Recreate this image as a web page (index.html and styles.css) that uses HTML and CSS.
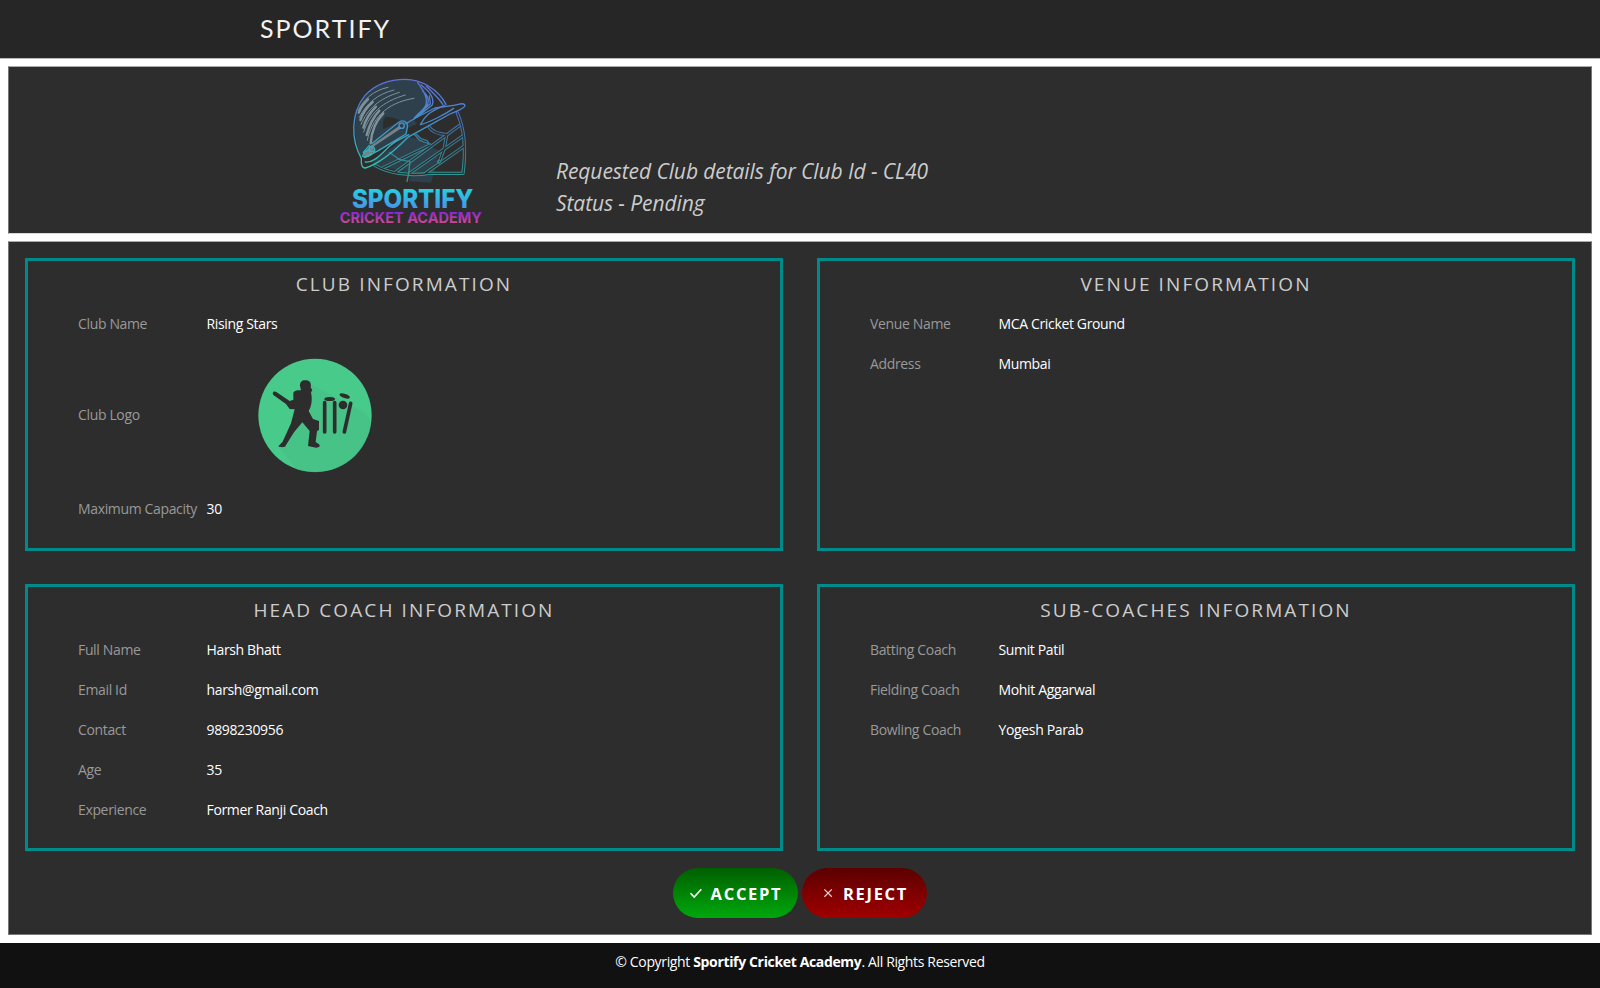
FILE: index.html
```html
<!DOCTYPE html>
<html lang="en">
<head>
<meta charset="utf-8">
<title>Sportify</title>
<link rel="stylesheet" href="styles.css">
</head>
<body>
<header class="topbar"><a class="brand">SPORTIFY</a></header>
<main>
  <section class="panel intro">
    <svg class="logo" viewBox="0 6 510 498">
      <defs>
        <linearGradient id="shell" gradientUnits="userSpaceOnUse" x1="0" y1="42" x2="0" y2="310"><stop offset="0" stop-color="#5f6fdb"/><stop offset=".5" stop-color="#438fc8"/><stop offset="1" stop-color="#2fc6ae"/></linearGradient>
        <linearGradient id="grill" gradientUnits="userSpaceOnUse" x1="0" y1="120" x2="0" y2="350"><stop offset="0" stop-color="#5367c8"/><stop offset=".55" stop-color="#367f93"/><stop offset="1" stop-color="#319b91"/></linearGradient>
        <linearGradient id="name" x1="0" y1="0" x2="0" y2="1"><stop offset=".2" stop-color="#25d0e0"/><stop offset=".85" stop-color="#4b91e8"/></linearGradient>
        <linearGradient id="sub" x1="0" y1="0" x2="0" y2="1"><stop offset=".2" stop-color="#8d28d6"/><stop offset=".9" stop-color="#cf4c8b"/></linearGradient>
      </defs>
      <path fill="#2d404b" d="M94 275C60 205 72 105 139 64C180 42 232 37 274 55L296 98L284 133L247 159L262 176L232 190L228 215L270 222L300 246L326 255L320 296L303 353L237 349L240 325L146 302Z"/>
      <path fill="#2d2d2d" d="M166 155C158 168 158 182 160 192L205 171L216 168L190 158Z"/>
      <g fill="none" stroke="#81929a" stroke-linecap="round">
        <path stroke-width="3" d="M84 137C100 104 130 76 174 67M88 157C109 116 142 87 192 75M93 178C112 134 145 101 208 82M101 201C118 147 155 110 226 90M112 226C124 166 165 113 252 100"/>
        <path stroke-width="7" d="M86 143C94 125 102 114 114 103M91 165C99 143 112 125 128 111M100 188C107 162 121 142 138 125M110 210C118 180 130 156 148 137M122 235C124 202 138 168 160 145"/>
      </g>
      <path fill="#74828a" d="M102 265L121 243L208 182L214 190L132 244L123 274L103 278Z"/>
      <g fill="none" stroke-linecap="round" stroke-linejoin="round">
        <g stroke="url(#grill)" stroke-width="10">
          <path d="M160 308L300 240M196 322L388 182M240 324L396 215M286 325L401 245"/>
          <path d="M296 184C303 198 325 207 350 209L343 250L329 288M382 144C401 187 409 248 399 325H297C245 333 181 328 135 301"/>
        </g>
        <g stroke="#2d2f31" stroke-width="4">
          <path d="M160 308L300 240M196 322L388 182M240 324L396 215M286 325L401 245"/>
          <path d="M296 184C303 198 325 207 350 209L343 250L329 288M382 144C401 187 409 248 399 325H297C245 333 181 328 135 301"/>
        </g>
        <path stroke="url(#grill)" stroke-width="4" d="M178 262L207 283L240 290L236 326L231 349M252 207L269 226L298 237L291 227L273 221L259 208"/>
      </g>
      <circle cx="327" cy="290" r="5" fill="none" stroke="#368d91" stroke-width="3"/>
      <path fill="#2d2d2d" d="M98 284L205 218L298 178L330 160L400 121L366 142L299 181L237 211L106 305Z"/>
      <g fill="none" stroke="url(#shell)" stroke-width="4" stroke-linecap="round" stroke-linejoin="round">
        <path d="M94 280C62 224 62 145 105 91C136 58 180 43 226 43C274 43 325 73 348 118"/>
        <path d="M263 53C283 79 302 111 280 132L253 158M274 60C296 78 316 98 306 121L260 157M289 63C306 82 328 100 338 118M278 78C307 103 296 128 265 148M298 93L301 116L251 163"/>
        <path d="M94 281C93 300 96 310 106 309C145 296 194 257 232 218L298 181L360 147C383 136 403 132 405 121C401 110 383 120 365 122L315 129C288 143 258 157 228 176"/>
        <path d="M271 179C296 173 342 150 371 130M272 178C282 155 299 139 344 121M106 291C131 295 154 266 182 241C203 223 218 219 237 209M127 235L204 173C219 160 235 173 232 188L228 207L145 257L105 277L98 273L105 259L116 255"/>
        <circle cx="215" cy="182" r="8"/><circle cx="125" cy="252" r="8"/>
        <path d="M118 241L100 262M134 252C137 265 114 276 103 275"/>
      </g>
      <text class="logo-name" x="66" y="428" textLength="364" lengthAdjust="spacingAndGlyphs">SPORTIFY</text>
      <text class="logo-sub" x="29" y="473" textLength="427" lengthAdjust="spacingAndGlyphs">CRICKET ACADEMY</text>
    </svg>
    <p class="summary">Requested Club details for Club Id - CL40<br>Status - Pending</p>
  </section>
  <section class="panel details">
    <div class="cards">
      <article class="card">
        <h2>CLUB INFORMATION</h2>
        <dl>
          <dt>Club Name</dt><dd>Rising Stars</dd>
          <dt class="tall">Club Logo</dt>
          <dd class="tall"><svg class="club-logo" viewBox="0 0 390 390">
            <circle cx="195" cy="196" r="170" fill="#48ca8b"/>
            <path fill="#45bc84" d="M184 104L344 188C365 205 367 235 350 264C318 350 217 386 137 356L88 293L118 233L179 184Z" opacity=".5"/>
            <g fill="#2d2d2d"><path d="M150 108C149 94 158 89 169 91C181 92 185 102 182 112L187 121L183 127C188 151 184 171 176 183L189 207L207 213V239L201 244L197 276L207 283C214 291 203 295 191 292L174 288L179 243L157 217L132 247L108 285C108 293 90 293 85 289L98 275L123 220L134 178L119 177L108 162L71 136C65 129 70 121 79 126L119 153L130 149V129C133 121 141 121 153 121Z"/>
            <ellipse cx="239" cy="147" rx="16" ry="6"/><ellipse cx="284" cy="138" rx="16" ry="6" transform="rotate(18 284 138)"/><circle cx="279" cy="165" r="13"/></g>
            <path d="M224 158V246M254 158V246M302 160L283 246" stroke="#2d2d2d" stroke-width="11" stroke-linecap="round"/>
          </svg></dd>
          <dt>Maximum Capacity</dt><dd>30</dd>
        </dl>
      </article>
      <article class="card">
        <h2>VENUE INFORMATION</h2>
        <dl><dt>Venue Name</dt><dd>MCA Cricket Ground</dd><dt>Address</dt><dd>Mumbai</dd></dl>
      </article>
      <article class="card">
        <h2>HEAD COACH INFORMATION</h2>
        <dl><dt>Full Name</dt><dd>Harsh Bhatt</dd><dt>Email Id</dt><dd>harsh@gmail.com</dd><dt>Contact</dt><dd>9898230956</dd><dt>Age</dt><dd>35</dd><dt>Experience</dt><dd>Former Ranji Coach</dd></dl>
      </article>
      <article class="card">
        <h2>SUB-COACHES INFORMATION</h2>
        <dl><dt>Batting Coach</dt><dd>Sumit Patil</dd><dt>Fielding Coach</dt><dd>Mohit Aggarwal</dd><dt>Bowling Coach</dt><dd>Yogesh Parab</dd></dl>
      </article>
    </div>
    <div class="actions">
      <button class="btn accept"><svg viewBox="0 0 14 14"><path d="M1.5 7.3L5.2 11L12.3 3.2" fill="none" stroke="#fff" stroke-width="1.6"/></svg>ACCEPT</button>
      <button class="btn reject"><svg viewBox="0 0 14 14"><path d="M3.4 3.4L10.8 10.8M10.8 3.4L3.4 10.8" fill="none" stroke="#e4cccc" stroke-width="1.3"/></svg>REJECT</button>
    </div>
  </section>
</main>
<footer>© Copyright <strong>Sportify Cricket Academy</strong>. All Rights Reserved</footer>
</body>
</html>
```
FILE: styles.css
```css
* { box-sizing: border-box; }
body { margin: 0; height: 988px; overflow: hidden; background: #fff; font-family: "Open Sans", sans-serif; font-size: 14px; letter-spacing: -0.35px; color: #fff; display: flex; flex-direction: column; }
.topbar { height: 59px; background: #262626; border-bottom: 1px solid #bbb; display: flex; align-items: center; padding: 0 0 2px 260px; }
.brand { font-family: Lato, sans-serif; font-size: 25px; letter-spacing: 2px; color: #f2f2f2; }
main { padding: 7px 8px 0; display: flex; flex-direction: column; gap: 7px; height: 884px; }
.panel { background: #2d2d2d; border: 1px solid #aaa; border-left-color: #777; border-right-color: #777; }
.intro { height: 168px; display: flex; padding-left: 321px; border-bottom-color: #d8d8d8; }
.logo { width: 170px; height: 166px; letter-spacing: 0; }
.logo-name { font: 800 76px Inter, sans-serif; fill: url(#name); }
.logo-sub { font: 700 43px Inter, sans-serif; fill: url(#sub); }
.summary { margin: 88px 0 0 56px; font-size: 21px; line-height: 32px; letter-spacing: -0.08px; font-style: italic; color: #ccc; }
.details { height: 694px; padding: 16px; border-bottom-color: #777; }
.cards { display: grid; grid-template-columns: 758px 758px; grid-template-rows: 293px 267px; column-gap: 34px; row-gap: 33px; }
.card { border: 3px solid #008b8b; padding: 9px 50px 0; }
h2 { margin: 0; font-size: 19px; line-height: 28px; font-weight: 400; letter-spacing: 2.1px; color: #ccc; text-align: center; }
dl { margin: 6px 0 0; display: grid; grid-template-columns: 128.5px 1fr; line-height: 40px; }
dt { color: #999; white-space: nowrap; }
dd { margin: 0; }
.tall { height: 145px; line-height: 142px; }
.club-logo { display: block; width: 130px; height: 130px; margin: 6px 0 0 43px; }
.actions { display: flex; justify-content: center; gap: 4px; margin-top: 17px; }
.btn { width: 125px; height: 50px; border: 0; border-radius: 25px; color: #fff; font: 700 16.5px "Open Sans", sans-serif; letter-spacing: 1.7px; display: flex; align-items: center; justify-content: center; padding: 0; }
.btn svg { width: 14px; height: 14px; margin-right: 8px; }
.accept { background: linear-gradient(#005f00, #00a80d); }
.reject { background: linear-gradient(#5c0000, #a00000); }
footer { height: 45px; background: #111; text-align: center; line-height: 37px; }
```
